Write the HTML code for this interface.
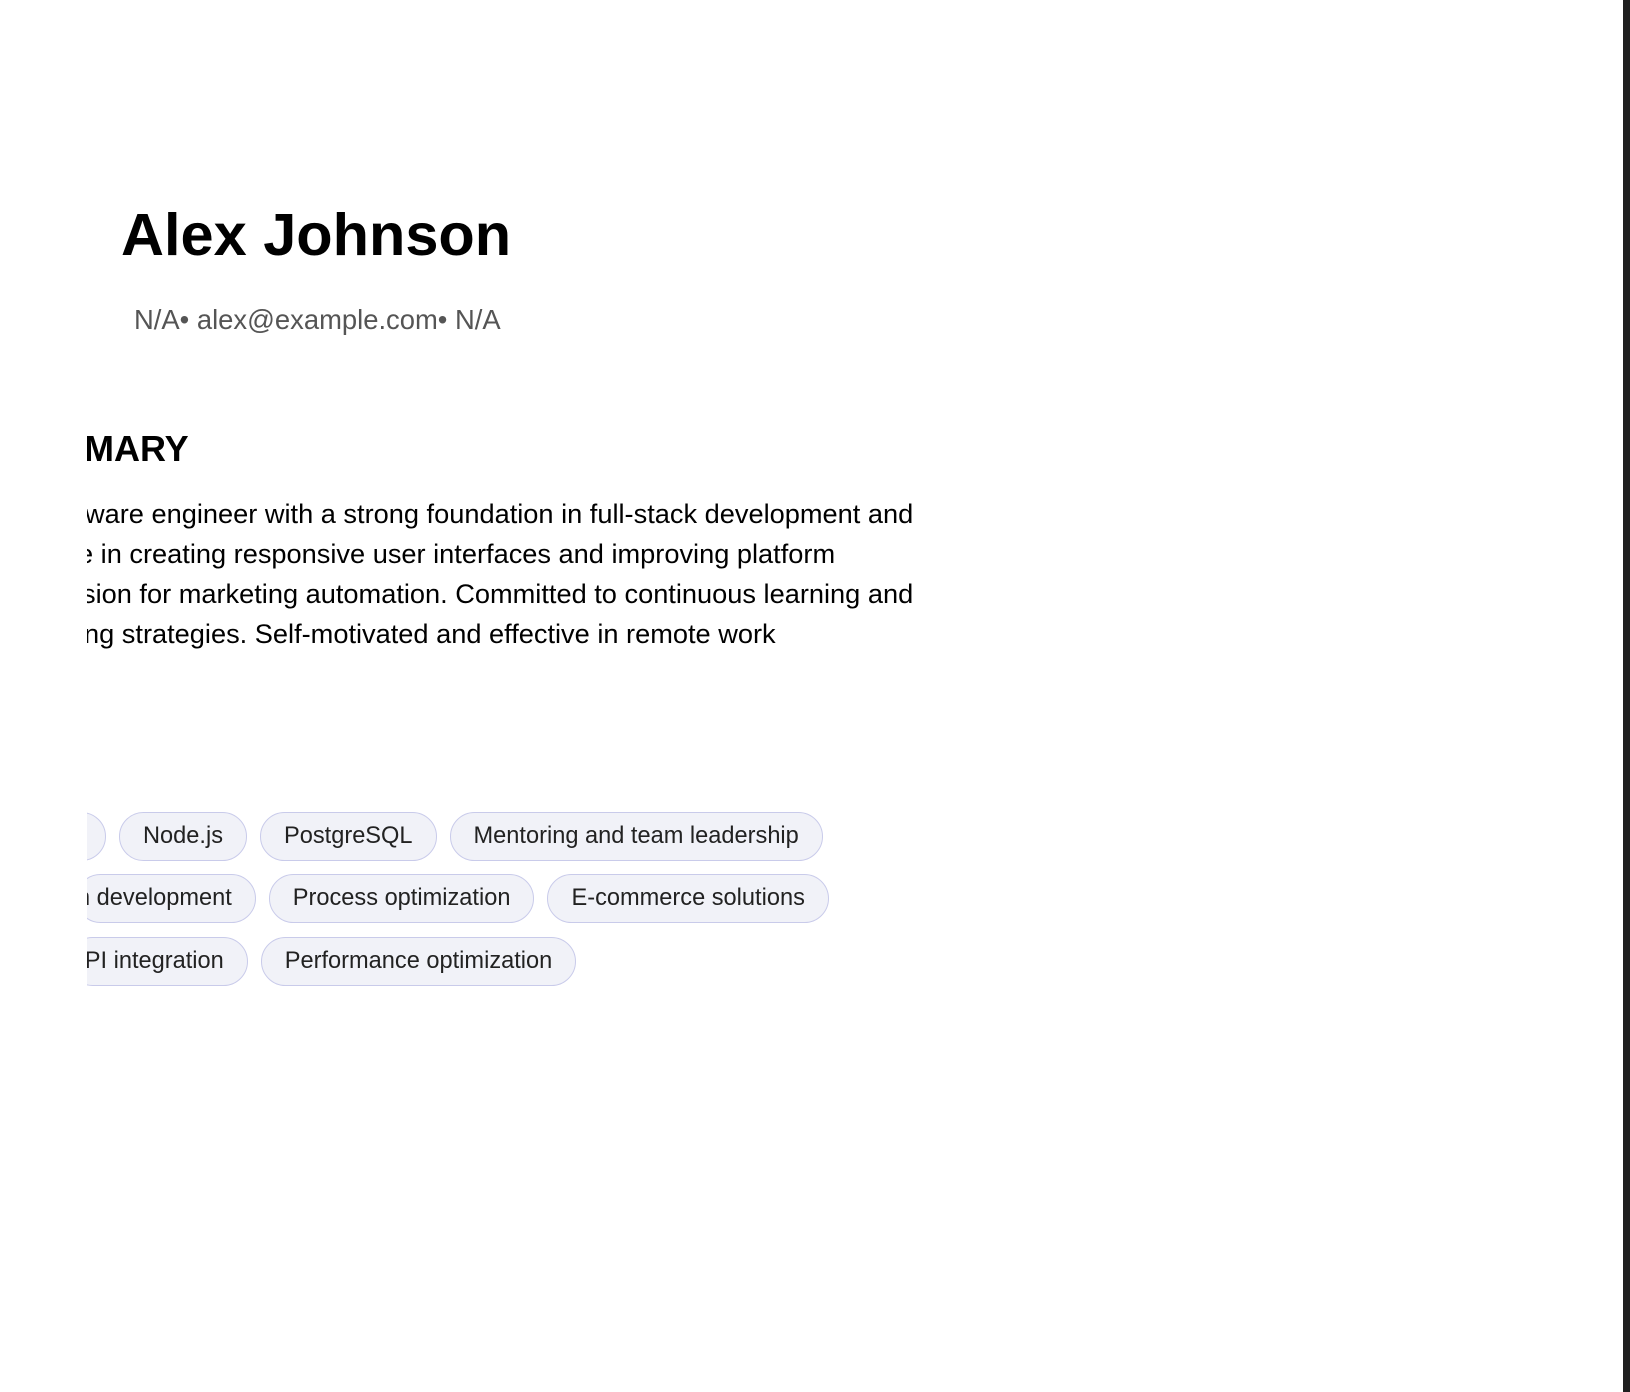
<!DOCTYPE html>
<html><head><meta charset="utf-8"><style>
html,body{margin:0;padding:0;background:#fff;width:1630px;height:1392px;overflow:hidden;position:relative;font-family:"Liberation Sans",Arial,sans-serif;}
.bar{position:absolute;left:1623px;top:0;width:7px;height:1392px;background:#1f1f1f;}
h1{position:absolute;left:121px;top:198px;margin:0;font-size:59.5px;font-weight:bold;color:#000;line-height:74px;white-space:nowrap;}
.contact{position:absolute;left:134px;top:302px;font-size:27.4px;color:#555;line-height:36px;white-space:nowrap;}
.clip{position:absolute;left:87px;top:0;width:1000px;height:1392px;overflow:hidden;}
.h2{position:absolute;left:-3px;top:425px;font-size:36px;font-weight:bold;color:#000;line-height:48px;white-space:nowrap;}
.p{position:absolute;left:0;top:494px;font-size:27.2px;line-height:40px;color:#000;white-space:nowrap;}
.p div{height:40px;}
.row{position:absolute;left:0;display:flex;gap:13px;}
.chip{box-sizing:border-box;height:49px;border:1.5px solid #c9cbea;background:#f1f2f8;border-radius:25px;padding:0 23px;display:flex;align-items:center;font-size:23.6px;color:#222;white-space:nowrap;}
</style></head><body>
<h1>Alex Johnson</h1>
<div class="contact">N/A• alex@example.com• N/A</div>
<div class="clip">
<div class="h2">MARY</div>
<div class="p">
<div style="margin-left:-2px">ware engineer with a strong foundation in full-stack development and</div>
<div style="margin-left:-9px">e in creating responsive user interfaces and improving platform</div>
<div style="margin-left:-5px">sion for marketing automation. Committed to continuous learning and</div>
<div style="margin-left:-3px">ng strategies. Self-motivated and effective in remote work</div>
</div>
<div class="row" style="top:812px;left:-60px"><div class="chip" style="width:79px"></div><div class="chip">Node.js</div><div class="chip">PostgreSQL</div><div class="chip">Mentoring and team leadership</div></div>
<div class="row" style="top:874px;left:-11px"><div class="chip" style="padding-left:0">n development</div><div class="chip">Process optimization</div><div class="chip">E-commerce solutions</div></div>
<div class="row" style="top:937px;left:-19px"><div class="chip" style="padding-left:0">API integration</div><div class="chip">Performance optimization</div></div>
</div>
<div class="bar"></div>
</body></html>
